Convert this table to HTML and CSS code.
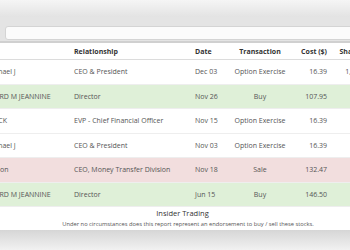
FILE: index.html
```html
<!DOCTYPE html>
<html>
<head>
<meta charset="utf-8">
<link rel="stylesheet" href="styles.css">
</head>
<body>
<div class="page">
  <div class="shade-top"></div>
  <div class="toolbar"><div class="search"></div></div>
  <table class="grid">
    <colgroup>
      <col class="c-name"><col class="c-rel"><col class="c-date"><col class="c-tx"><col class="c-cost"><col class="c-sh"><col class="c-val">
    </colgroup>
    <thead>
      <tr><th class="l">Insider</th><th class="l">Relationship</th><th class="l">Date</th><th>Transaction</th><th class="r">Cost ($)</th><th class="r">Shares</th><th class="r">Value ($)</th></tr>
    </thead>
    <tbody>
      <tr><td>Stewart Michael J</td><td>CEO &amp; President</td><td>Dec 03</td><td class="c">Option Exercise</td><td class="r">16.39</td><td class="r">1,000</td><td class="r">16,390</td></tr>
      <tr class="buy"><td>ROSS RICHARD M JEANNINE</td><td>Director</td><td>Nov 26</td><td class="c">Buy</td><td class="r">107.95</td><td class="r">500</td><td class="r">53,975</td></tr>
      <tr><td>GRAY PATRICK</td><td>EVP - Chief Financial Officer</td><td>Nov 15</td><td class="c">Option Exercise</td><td class="r">16.39</td><td class="r">800</td><td class="r">13,112</td></tr>
      <tr><td>Stewart Michael J</td><td>CEO &amp; President</td><td>Nov 03</td><td class="c">Option Exercise</td><td class="r">16.39</td><td class="r">900</td><td class="r">14,751</td></tr>
      <tr class="sale"><td>Richard Wilson</td><td>CEO, Money Transfer Division</td><td>Nov 18</td><td class="c">Sale</td><td class="r">132.47</td><td class="r">600</td><td class="r">79,482</td></tr>
      <tr class="buy"><td>ROSS RICHARD M JEANNINE</td><td>Director</td><td>Jun 15</td><td class="c">Buy</td><td class="r">146.50</td><td class="r">400</td><td class="r">58,600</td></tr>
    </tbody>
  </table>
  <div class="caption">Insider Trading</div>
  <div class="note">Under no circumstances does this report represent an endorsement to buy / sell these stocks.</div>
  <div class="shade-bottom"></div>
</div>
</body>
</html>
```

FILE: styles.css
```css
html, body {
  margin: 0;
  padding: 0;
  background: #ffffff;
  overflow: hidden;
}
body {
  width: 350px;
  height: 250px;
  font-family: "Open Sans", "DejaVu Sans", sans-serif;
  color: #555555;
}
.page {
  margin-left: -44px;
  width: 464px;
}
.shade-top {
  height: 17px;
  background: linear-gradient(#f5f5f5, #e3e3e3);
}
.toolbar {
  height: 26px;
  background: #e4e4e4;
  padding: 9px 0 0 49px;
  box-sizing: border-box;
  border-bottom: 2px solid #d0d0d0;
}
.search {
  height: 14px;
  background: #fbfbfb;
  border: 1px solid #d4d4d4;
  border-radius: 3px;
  box-sizing: border-box;
}
.grid {
  width: 100%;
  border-collapse: collapse;
  table-layout: fixed;
  font-size: 7px;
}
.c-name { width: 114px; }
.c-rel { width: 121px; }
.c-date { width: 39px; }
.c-tx { width: 60px; }
.c-cost { width: 40px; }
.c-sh { width: 36px; }
.c-val { width: 54px; }
.grid th {
  height: 16px;
  font-weight: 700;
  color: #333333;
  text-align: center;
  padding: 0 4px;
  border-bottom: 1px solid #dcdcdc;
  white-space: nowrap;
}
.grid td {
  height: 23.5px;
  padding: 0 4px;
  border-bottom: 1px solid #eeeeee;
  white-space: nowrap;
  overflow: hidden;
}
.grid th.l { text-align: left; }
.grid th.r, .grid td.r { text-align: right; padding-right: 3px; }
.grid td.c { text-align: center; }
.grid tr.buy td { background: #dff0d8; }
.grid tr.sale td { background: #f2dede; }
.caption {
  text-align: center;
  font-size: 7.5px;
  color: #333333;
  margin-top: 1px;
  padding-right: 11px;
  line-height: 11px;
}
.note {
  text-align: center;
  font-size: 5.75px;
  color: #555555;
  line-height: 11px;
  height: 11px;
}
.shade-bottom {
  height: 22px;
  background: linear-gradient(#d6d6d6, #f4f4f4);
}
```
